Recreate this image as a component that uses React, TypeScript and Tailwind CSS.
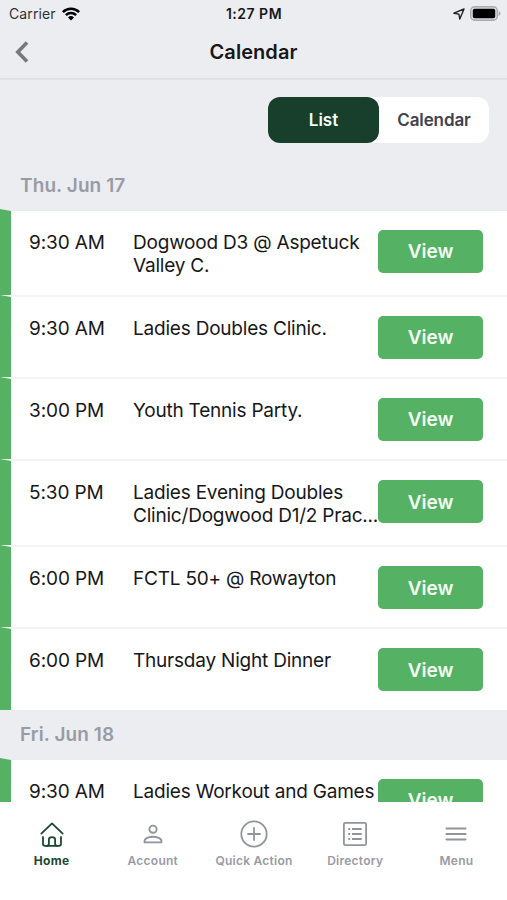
import React from "react";

type Event = { time: string; lines: string[]; height: string; first?: boolean };

const thursday: Event[] = [
  { time: "9:30 AM", lines: ["Dogwood D3 @ Aspetuck", "Valley C."], height: "h-[86px]", first: true },
  { time: "9:30 AM", lines: ["Ladies Doubles Clinic."], height: "h-[82px]" },
  { time: "3:00 PM", lines: ["Youth Tennis Party."], height: "h-[82.4px]" },
  { time: "5:30 PM", lines: ["Ladies Evening Doubles", "Clinic/Dogwood D1/2 Prac..."], height: "h-[86px]" },
  { time: "6:00 PM", lines: ["FCTL 50+ @ Rowayton"], height: "h-[82px]" },
  { time: "6:00 PM", lines: ["Thursday Night Dinner"], height: "h-[82.6px]" },
];

const friday: Event[] = [
  { time: "9:30 AM", lines: ["Ladies Workout and Games"], height: "h-[82px]", first: true },
];

function EventRow({ event }: { event: Event }) {
  return (
    <div
      className={`flex shrink-0 items-start border-t-2 border-l-[11px] border-l-[#55b163] bg-white bg-clip-padding pl-[18px] ${
        event.first ? "border-t-[#ecedf1]" : "border-t-[#f4f4f5]"
      } ${event.height}`}
    >
      <div className="w-[104px] shrink-0 pt-5 text-[19px] leading-[23px] tracking-[-0.1px] text-[#17171a]">
        {event.time}
      </div>
      <div className="w-[245px] shrink-0 pt-5 text-[19px] leading-[23px] tracking-[-0.21px] whitespace-nowrap text-[#17171a]">
        {event.lines.map((line) => (
          <div key={line}>{line}</div>
        ))}
      </div>
      <button className="mt-[19px] h-[43px] w-[105px] shrink-0 rounded-[5px] bg-[#55b163] pt-[2px] text-[19px] font-semibold text-[#f5fff5]">
        View
      </button>
    </div>
  );
}

function HomeIcon() {
  return (
    <svg width="24" height="26" viewBox="0 0 24 26" fill="none" stroke="#1d4732" strokeWidth="1.8" strokeLinecap="round" strokeLinejoin="round">
      <path d="M1.3 12.6 12 2.4l10.7 10.2" />
      <path d="M3 16v6.8q0 2 2 2h14q2 0 2-2V16" />
      <path d="M6.7 24.8q2.2 0 2.2-2v-4.2q0-2.4 3.1-2.4t3.1 2.4v4.2q0 2 2.2 2" />
    </svg>
  );
}

function AccountIcon() {
  return (
    <svg width="20" height="20" viewBox="0 0 20 20" fill="none" stroke="#92949d" strokeWidth="1.9">
      <circle cx="10" cy="5.2" r="3.6" />
      <path d="M1.6 18.4v-1.6c0-2.6 4.5-4 8.4-4s8.4 1.4 8.4 4v1.6Z" strokeLinejoin="round" />
    </svg>
  );
}

function PlusIcon() {
  return (
    <svg width="28" height="28" viewBox="0 0 28 28" fill="none" stroke="#92949d" strokeWidth="1.8" strokeLinecap="round">
      <circle cx="14" cy="14" r="12.7" />
      <path d="M14 8v12M8 14h12" />
    </svg>
  );
}

function DirectoryIcon() {
  return (
    <svg width="24" height="24" viewBox="0 0 24 24" fill="none" stroke="#92949d" strokeWidth="1.8">
      <rect x="0.9" y="0.9" width="22.2" height="22.2" rx="1.3" />
      <path d="M5.3 7h1.9M9 7h9.7M5.3 12h1.9M9 12h9.7M5.3 17h1.9M9 17h9.7" strokeWidth="2" />
    </svg>
  );
}

function MenuIcon() {
  return (
    <svg width="22" height="16" viewBox="0 0 22 16" stroke="#92949d" strokeWidth="2" strokeLinecap="round">
      <path d="M1.5 2.5h19M1.5 8h19M1.5 13.5h19" />
    </svg>
  );
}

function Tab({ label, icon, active }: { label: string; icon: React.ReactNode; active?: boolean }) {
  return (
    <div className="flex flex-1 flex-col items-center pt-[18px]">
      <div className="flex h-7 items-center justify-center">{icon}</div>
      <div
        className={`mt-[5px] text-[12px] leading-[16px] whitespace-nowrap ${
          active ? "font-bold tracking-[0.3px] text-[#1d4732]" : "font-semibold tracking-[0.25px] text-[#999ba4]"
        }`}
      >
        {label}
      </div>
    </div>
  );
}

export default function App() {
  return (
    <div className="flex h-[900px] w-[507px] flex-col overflow-hidden bg-[#ecedf1] font-['Inter','Liberation_Sans',sans-serif]">
      <div className="grid h-[27px] shrink-0 grid-cols-3 items-center pr-[6px] pl-[9px] text-[14px] text-[#17171a]">
        <div className="flex items-center gap-[6px]">
          <span className="tracking-[0.1px] text-[#303034]">Carrier</span>
          <svg width="18" height="14" viewBox="0 0 18 14" fill="none" stroke="#000" strokeWidth="2.5">
            <path d="M.9 5.1a11.5 11.5 0 0 1 16.2 0M3.9 8.1a7.2 7.2 0 0 1 10.2 0" />
            <path d="M9 13.5 6 10.5a4.3 4.3 0 0 1 6 0Z" fill="#000" stroke="none" />
          </svg>
        </div>
        <div className="pr-[2px] text-center font-semibold tracking-[0.5px]">1:27 PM</div>
        <div className="flex items-center justify-end gap-[5px]">
          <svg width="12" height="12" viewBox="0 0 12 12" fill="none" stroke="#222226" strokeWidth="1.4" strokeLinejoin="round">
            <path d="M11 1 .9 5.2l5 .9.9 5Z" />
          </svg>
          <svg width="31" height="15" viewBox="0 0 31 15">
            <rect x=".7" y=".7" width="26.6" height="13.6" rx="4" fill="#dcdde0" stroke="#a9aaae" strokeWidth="1.4" />
            <rect x="2.8" y="2.8" width="22.4" height="9.4" rx="1.8" fill="#000" />
            <path d="M28.7 5v5q1.8-.7 1.8-2.5T28.7 5Z" fill="#a9aaae" />
          </svg>
        </div>
      </div>

      <div className="grid h-[53px] shrink-0 grid-cols-3 items-center border-b-2 border-[#e0e1e5] px-[15px] pb-[2px]">
        <svg width="14" height="22" viewBox="0 0 14 22" fill="none" stroke="#77787a" strokeWidth="3.6">
          <path d="M12 1.6 2.8 11l9.2 9.4" />
        </svg>
        <h1 className="text-center text-[20px] font-semibold tracking-[0.05px] text-[#17171a]">Calendar</h1>
      </div>

      <div className="flex h-[80px] shrink-0 justify-end pt-[17px] pr-[18px]">
        <div className="flex h-[46px] w-[221px] rounded-[12px] bg-white text-[17px] font-semibold">
          <button className="w-[111px] rounded-[12px] bg-[#173f2b] pt-[2px] text-[#f4fff8]">List</button>
          <button className="flex-1 pt-[2px] tracking-[-0.1px] text-[#41424f]">Calendar</button>
        </div>
      </div>

      <main className="flex min-h-0 flex-1 flex-col overflow-hidden">
        <h2 className="h-[49px] shrink-0 pt-[14px] pl-5 text-[19px] leading-6 font-semibold tracking-[0.1px] text-[#999ba4]">Thu. Jun 17</h2>
        {thursday.map((event, i) => (
          <EventRow key={i} event={event} />
        ))}
        <h2 className="h-[48px] shrink-0 pt-[13px] pl-5 text-[19px] leading-6 font-semibold tracking-[0.1px] text-[#999ba4]">Fri. Jun 18</h2>
        {friday.map((event, i) => (
          <EventRow key={i} event={event} />
        ))}
      </main>

      <nav className="flex h-[98px] shrink-0 bg-white pl-px">
        <Tab label="Home" icon={<HomeIcon />} active />
        <Tab label="Account" icon={<AccountIcon />} />
        <Tab label="Quick Action" icon={<PlusIcon />} />
        <Tab label="Directory" icon={<DirectoryIcon />} />
        <Tab label="Menu" icon={<MenuIcon />} />
      </nav>
    </div>
  );
}
